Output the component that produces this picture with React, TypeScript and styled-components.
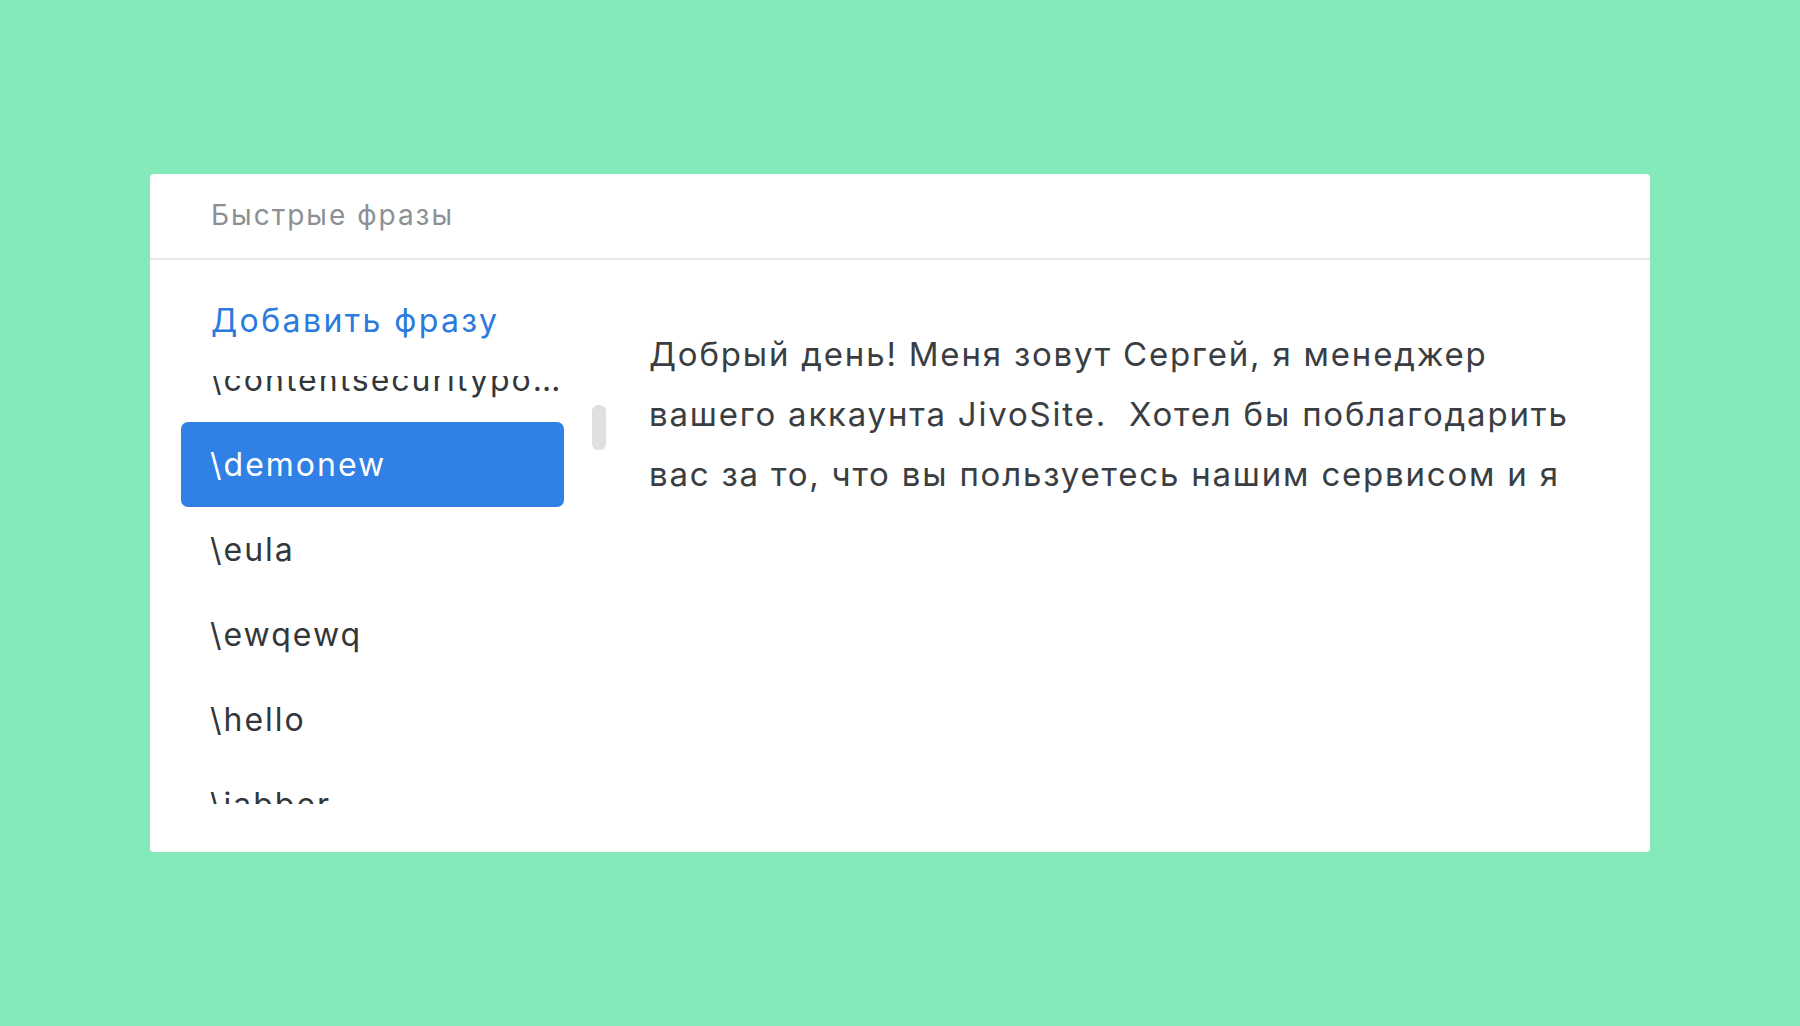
import React, { useLayoutEffect, useRef } from 'react';
import styled, { createGlobalStyle } from 'styled-components';

const GlobalStyle = createGlobalStyle`
    html, body {
        margin: 0;
        padding: 0;
    }
    body {
        font-family: Inter, "Noto Sans", "Liberation Sans", sans-serif;
        -webkit-font-smoothing: antialiased;
    }
`;

const Page = styled.div`
    width: 100vw;
    height: 100vh;
    background-color: #85eaba;
    display: flex;
    align-items: center;
    justify-content: center;
`;

const Card = styled.div`
    width: 1500px;
    height: 678px;
    background: #ffffff;
    border-radius: 4px;
    overflow: hidden;
    display: flex;
    flex-direction: column;
`;

const Header = styled.div`
    height: 86px;
    padding: 0 0 3px 61px;
    box-sizing: border-box;
    display: flex;
    align-items: center;
    border-bottom: 2px solid #e7e8e9;
    font-size: 28px;
    letter-spacing: 2px;
    color: #8b9095;
    flex-shrink: 0;
`;

const Body = styled.div`
    flex: 1;
    display: flex;
`;

const Sidebar = styled.div`
    width: 470px;
    padding: 41px 0 0 31px;
    box-sizing: border-box;
    display: flex;
    flex-direction: column;
`;

const AddLink = styled.a`
    display: block;
    padding-left: 30px;
    height: 40px;
    line-height: 40px;
    font-size: 32px;
    letter-spacing: 2.4px;
    color: #2b7ade;
    text-decoration: none;
    cursor: pointer;
`;

const ListWrap = styled.div`
    position: relative;
    margin-top: 35px;
    width: 425px;
`;

const List = styled.div`
    width: 383px;
    height: 428px;
    overflow: hidden;
`;

const Item = styled.div<{ $active?: boolean }>`
    height: 85px;
    line-height: 85px;
    padding: 0 0 0 29px;
    border-radius: 7px;
    font-size: 32px;
    letter-spacing: 2px;
    white-space: nowrap;
    overflow: hidden;
    text-overflow: ellipsis;
    color: ${p => (p.$active ? '#ffffff' : '#33373b')};
    background-color: ${p => (p.$active ? '#3180e5' : 'transparent')};
`;

const ScrollThumb = styled.div`
    position: absolute;
    top: 29px;
    left: 411px;
    width: 14px;
    height: 45px;
    border-radius: 6px;
    background-color: #dfe0e2;
`;

const Preview = styled.div`
    flex: 1;
    padding: 64px 30px 0 29px;
    font-size: 33px;
    letter-spacing: 1.8px;
    line-height: 60px;
    color: #3a3e42;
    white-space: pre;
`;

const phrases = ['\\contentsecuritypolicy', '\\demonew', '\\eula', '\\ewqewq', '\\hello', '\\jabber', '\\thanks'];

const App: React.FC = () => {
    const listRef = useRef<HTMLDivElement>(null);

    useLayoutEffect(() => {
        if (listRef.current) listRef.current.scrollTop = 39;
    }, []);

    return (
        <Page>
            <GlobalStyle />
            <Card>
                <Header>Быстрые фразы</Header>
                <Body>
                    <Sidebar>
                        <AddLink>Добавить фразу</AddLink>
                        <ListWrap>
                            <List ref={listRef}>
                                {phrases.map(p => (
                                    <Item key={p} $active={p === '\\demonew'}>{p}</Item>
                                ))}
                            </List>
                            <ScrollThumb />
                        </ListWrap>
                    </Sidebar>
                    <Preview>
                        {'Добрый день! Меня зовут Сергей, я менеджер\nвашего аккаунта JivoSite.  Хотел бы поблагодарить\nвас за то, что вы пользуетесь нашим сервисом и я'}
                    </Preview>
                </Body>
            </Card>
        </Page>
    );
};

export default App;
